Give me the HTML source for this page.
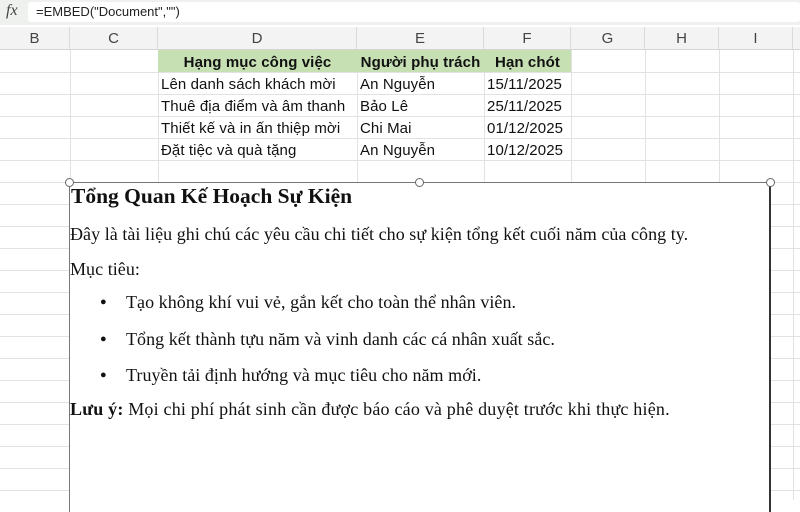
<!DOCTYPE html>
<html><head><meta charset="utf-8"><style>
*{margin:0;padding:0;box-sizing:border-box}
body{width:800px;height:500px;overflow:hidden;background:#fff;position:relative;font-family:"Liberation Sans",sans-serif}
.abs{position:absolute}
.fb{left:0;top:0;width:800px;height:25px;background:#eef1ee}
.inp{left:28px;top:2px;width:772px;height:20px;background:#fff;border-radius:3px;font-size:13px;line-height:20px;padding-left:8px;color:#222}
.fx{left:6px;top:2px;font-family:"Liberation Serif",serif;font-style:italic;font-size:16px;color:#444}
.hdr{left:0;top:27px;width:800px;height:23px;background:#f3f3f3;border-bottom:1px solid #d4d4d4}
.ch{position:absolute;top:0;height:23px;line-height:24px;text-align:center;font-size:15px;color:#444;border-right:1px solid #dadada}
.hl{position:absolute;left:0;width:800px;height:1px;background:#e2e2e2}
.vl{position:absolute;top:50px;width:1px;height:450px;background:#e2e2e2}
.cell{position:absolute;height:22px;line-height:25px;font-size:15px;color:#111;white-space:nowrap;padding-left:3px;letter-spacing:0.1px}
.g{background:#c6e0b4;font-weight:bold;text-align:center;padding:0}
.box{left:69px;top:182px;width:702px;height:330px;background:#fff;border-left:1px solid #777;border-top:1px solid #777;border-right:2px solid #333}
.h{position:absolute;width:9px;height:9px;border:1.5px solid #666;border-radius:50%;background:#fff}
.doc{font-family:"Liberation Serif",serif;color:#111;position:absolute;white-space:nowrap;font-size:18px;letter-spacing:0.05px}
.b{font-size:11px}
</style></head><body>
<div class="abs fb"></div>
<div class="abs fx">fx</div>
<div class="abs inp">=EMBED("Document","")</div>
<div class="abs hdr">
<div class="ch" style="left:0;width:70px">B</div>
<div class="ch" style="left:70px;width:88px">C</div>
<div class="ch" style="left:158px;width:199px">D</div>
<div class="ch" style="left:357px;width:127px">E</div>
<div class="ch" style="left:484px;width:87px">F</div>
<div class="ch" style="left:571px;width:74px">G</div>
<div class="ch" style="left:645px;width:74px">H</div>
<div class="ch" style="left:719px;width:74px">I</div>
</div>
<div class="hl" style="top:72px"></div><div class="hl" style="top:94px"></div><div class="hl" style="top:116px"></div><div class="hl" style="top:138px"></div><div class="hl" style="top:160px"></div><div class="hl" style="top:182px"></div><div class="hl" style="top:204px"></div><div class="hl" style="top:226px"></div><div class="hl" style="top:248px"></div><div class="hl" style="top:270px"></div><div class="hl" style="top:292px"></div><div class="hl" style="top:314px"></div><div class="hl" style="top:336px"></div><div class="hl" style="top:358px"></div><div class="hl" style="top:380px"></div><div class="hl" style="top:402px"></div><div class="hl" style="top:424px"></div><div class="hl" style="top:446px"></div><div class="hl" style="top:468px"></div><div class="hl" style="top:490px"></div>
<div class="vl" style="left:70px"></div><div class="vl" style="left:158px"></div><div class="vl" style="left:357px"></div><div class="vl" style="left:484px"></div><div class="vl" style="left:571px"></div><div class="vl" style="left:645px"></div><div class="vl" style="left:719px"></div><div class="vl" style="left:793px"></div>
<div class="cell g" style="left:158px;top:50px;width:199px">Hạng mục công việc</div>
<div class="cell g" style="left:357px;top:50px;width:127px">Người phụ trách</div>
<div class="cell g" style="left:484px;top:50px;width:87px">Hạn chót</div>
<div class="cell" style="left:158px;top:72px">Lên danh sách khách mời</div>
<div class="cell" style="left:158px;top:94px">Thuê địa điểm và âm thanh</div>
<div class="cell" style="left:158px;top:116px">Thiết kế và in ấn thiệp mời</div>
<div class="cell" style="left:158px;top:138px">Đặt tiệc và quà tặng</div>
<div class="cell" style="left:357px;top:72px">An Nguyễn</div>
<div class="cell" style="left:357px;top:94px">Bảo Lê</div>
<div class="cell" style="left:357px;top:116px">Chi Mai</div>
<div class="cell" style="left:357px;top:138px">An Nguyễn</div>
<div class="cell" style="left:484px;top:72px">15/11/2025</div>
<div class="cell" style="left:484px;top:94px">25/11/2025</div>
<div class="cell" style="left:484px;top:116px">01/12/2025</div>
<div class="cell" style="left:484px;top:138px">10/12/2025</div>
<div class="abs box"></div>
<div class="h" style="left:65px;top:178px"></div>
<div class="h" style="left:415px;top:178px"></div>
<div class="h" style="left:766px;top:178px"></div>
<div class="doc" style="left:71px;top:184px;font-size:21.5px;font-weight:bold;letter-spacing:0">Tổng Quan Kế Hoạch Sự Kiện</div>
<div class="doc" style="left:70px;top:224px">Đây là tài liệu ghi chú các yêu cầu chi tiết cho sự kiện tổng kết cuối năm của công ty.</div>
<div class="doc" style="left:70px;top:259px">Mục tiêu:</div>
<div class="doc b" style="left:100px;top:296px">●</div>
<div class="doc" style="left:126px;top:292px">Tạo không khí vui vẻ, gắn kết cho toàn thể nhân viên.</div>
<div class="doc b" style="left:100px;top:333px">●</div>
<div class="doc" style="left:126px;top:329px">Tổng kết thành tựu năm và vinh danh các cá nhân xuất sắc.</div>
<div class="doc b" style="left:100px;top:369px">●</div>
<div class="doc" style="left:126px;top:365px">Truyền tải định hướng và mục tiêu cho năm mới.</div>
<div class="doc" style="left:70px;top:399px;letter-spacing:0.2px"><b>Lưu ý:</b> Mọi chi phí phát sinh cần được báo cáo và phê duyệt trước khi thực hiện.</div>
</body></html>
